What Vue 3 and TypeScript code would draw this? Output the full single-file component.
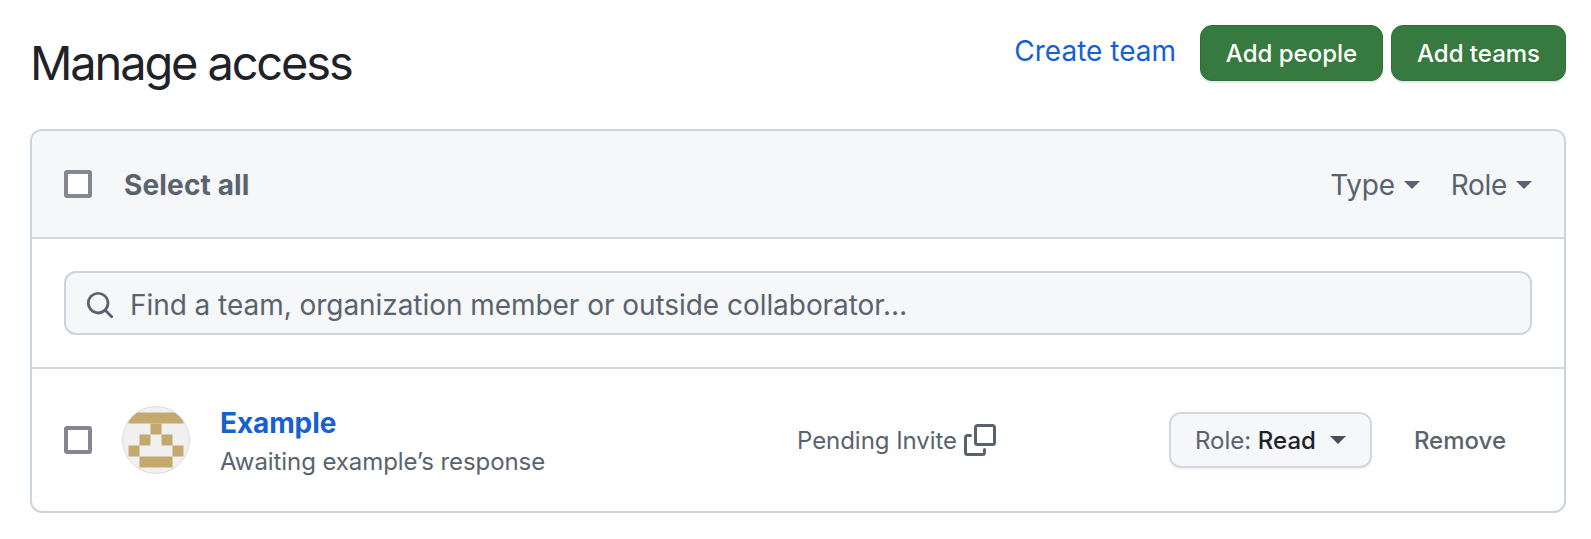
<template>
  <div class="page">
    <!-- Title row -->
    <header class="page-head">
      <h1 class="page-title">Manage access</h1>
      <div class="head-actions">
        <a class="create-link" href="#">Create team</a>
        <button class="btn-primary people">Add people</button>
        <button class="btn-primary teams">Add teams</button>
      </div>
    </header>

    <section class="access-box">
      <!-- Bulk header -->
      <div class="box-head">
        <span class="check"></span>
        <span class="select-all">Select all</span>
        <div class="filters">
          <span class="filter">Type<i class="caret"></i></span>
          <span class="filter">Role<i class="caret"></i></span>
        </div>
      </div>

      <!-- Search -->
      <div class="box-search">
        <div class="search-field">
          <svg class="search-icon" viewBox="0 0 16 16" aria-hidden="true">
            <path d="M10.68 11.74a6 6 0 0 1-7.922-8.982 6 6 0 0 1 8.982 7.922l3.04 3.04a.749.749 0 0 1-.326 1.275.749.749 0 0 1-.734-.215ZM11.5 7a4.499 4.499 0 1 0-8.997 0A4.499 4.499 0 0 0 11.5 7Z" />
          </svg>
          <span class="placeholder">Find a team, organization member or outside collaborator…</span>
        </div>
      </div>

      <!-- Member row -->
      <div class="member-row">
        <div class="member">
          <span class="check"></span>
          <svg class="avatar" viewBox="0 0 68 68" aria-hidden="true">
            <defs>
              <clipPath id="avatar-clip"><circle cx="34" cy="34" r="33.5" /></clipPath>
            </defs>
            <circle cx="34" cy="34" r="33.5" fill="#f0f0f0" />
            <g clip-path="url(#avatar-clip)">
              <rect v-for="p in pixels" :key="p.key" :x="p.x" :y="p.y" :width="p.w" height="11" fill="#c4a96f" />
            </g>
            <circle cx="34" cy="34" r="33.5" fill="none" stroke="#dcdcdc" />
          </svg>
          <div class="member-text">
            <a class="member-name" href="#">Example</a>
            <span class="member-note">Awaiting example’s response</span>
          </div>
        </div>
        <div class="pending">
          <span>Pending Invite</span>
          <svg class="copy-icon" viewBox="0 0 16 16" aria-hidden="true">
            <path d="M0 6.75C0 5.784.784 5 1.75 5h1.5a.75.75 0 0 1 0 1.5h-1.5a.25.25 0 0 0-.25.25v7.5c0 .138.112.25.25.25h7.5a.25.25 0 0 0 .25-.25v-1.5a.75.75 0 0 1 1.5 0v1.5A1.75 1.75 0 0 1 9.25 16h-7.5A1.75 1.75 0 0 1 0 14.25Z" />
            <path d="M5 1.75C5 .784 5.784 0 6.75 0h7.5C15.216 0 16 .784 16 1.75v7.5A1.75 1.75 0 0 1 14.25 11h-7.5A1.75 1.75 0 0 1 5 9.25Zm1.75-.25a.25.25 0 0 0-.25.25v7.5c0 .138.112.25.25.25h7.5a.25.25 0 0 0 .25-.25v-7.5a.25.25 0 0 0-.25-.25Z" />
          </svg>
        </div>
        <button class="role-btn">Role: <b>Read</b><i class="caret dark"></i></button>
        <span class="remove">Remove</span>
      </div>
    </section>
  </div>
</template>

<script setup lang="ts">
// identicon cells as [col, row, span]
const UNIT = 11;
const cells: [number, number, number][] = [
  [0, 0, 5],
  [2, 1, 1],
  [1, 2, 1],
  [3, 2, 1],
  [0, 3, 1],
  [4, 3, 1],
  [1, 4, 3],
];

const pixels = cells.map(([col, row, span]) => ({
  key: `${col}-${row}`,
  x: 6.5 + col * UNIT,
  y: 6.5 + row * UNIT,
  w: span * UNIT,
}));
</script>

<style>
html,
body {
  background: #ffffff;
}
</style>

<style scoped>
.page {
  box-sizing: border-box;
  width: 1591px;
  height: 539px;
  padding: 25px 25px 0 30px;
  font-family: Inter, "Liberation Sans", sans-serif;
  color: #59636e;
  overflow: hidden;
}

.page-head {
  display: flex;
  justify-content: space-between;
  align-items: flex-start;
  height: 104px;
}

.page-title {
  margin: 10px 0 0;
  font-size: 47px;
  line-height: 56px;
  font-weight: 400;
  letter-spacing: -2.15px;
  color: #1f2328;
}

.head-actions {
  display: flex;
  align-items: center;
}

.create-link {
  font-size: 28px;
  line-height: 50px;
  margin: -4px 24px 0 0;
  color: #1661d1;
  text-decoration: none;
}

.btn-primary {
  box-sizing: border-box;
  height: 56px;
  padding: 0;
  border: 1px solid #2f6f38;
  border-radius: 12px;
  background: #367a3f;
  color: #ffffff;
  font-family: inherit;
  font-size: 24px;
  font-weight: 500;
  box-shadow: 0 2px 1px rgba(31, 35, 40, 0.1);
}

.btn-primary.people {
  width: 183px;
  margin-right: 8px;
}

.btn-primary.teams {
  width: 175px;
}

.access-box {
  box-sizing: border-box;
  height: 384px;
  border: 2px solid #ccd3dc;
  border-radius: 12px;
  overflow: hidden;
}

.box-head {
  display: flex;
  align-items: center;
  height: 108px;
  padding: 0 32px;
  background: #f5f7f9;
  border-bottom: 2px solid #d3d8e0;
  box-sizing: border-box;
}

.check {
  box-sizing: border-box;
  flex: none;
  width: 28px;
  height: 28px;
  border: 4px solid #868692;
  border-radius: 3px;
  background: #ffffff;
}

.select-all {
  margin-left: 32px;
  margin-top: 2px;
  font-size: 28px;
  font-weight: 700;
  letter-spacing: 0.15px;
}

.filters {
  display: flex;
  gap: 31px;
  margin-left: auto;
  margin-top: 2px;
}

.filter {
  display: flex;
  align-items: center;
  gap: 9px;
  font-size: 28px;
  letter-spacing: -0.3px;
}

.caret {
  display: inline-block;
  width: 0;
  height: 0;
  border-style: solid;
  border-width: 8px 8px 0;
  border-color: #59636e transparent transparent;
}

.caret.dark {
  margin-left: 14px;
  border-top-color: #4a5059;
}

.box-search {
  box-sizing: border-box;
  height: 130px;
  padding: 32px 32px 0;
  border-bottom: 2px solid #d3d8e0;
}

.search-field {
  box-sizing: border-box;
  display: flex;
  align-items: center;
  gap: 15px;
  height: 64px;
  padding: 0 20px 0 19px;
  background: #f5f7f9;
  border: 2px solid #ccd3dc;
  border-radius: 12px;
}

.search-icon {
  flex: none;
  width: 30px;
  height: 30px;
  margin-top: 3px;
  fill: #59636e;
}

.placeholder {
  margin-top: 3px;
  font-size: 28px;
  letter-spacing: -0.05px;
  white-space: nowrap;
}

.member-row {
  display: flex;
  align-items: center;
  height: 142px;
  padding: 0 32px;
}

.member {
  display: flex;
  align-items: center;
  flex: 0 0 733px;
}

.avatar {
  flex: none;
  width: 68px;
  height: 68px;
  margin-left: 30px;
}

.member-text {
  display: flex;
  flex-direction: column;
  margin-top: 5px;
  margin-left: 30px;
}

.member-name {
  font-size: 28px;
  line-height: 38px;
  font-weight: 700;
  letter-spacing: -0.1px;
  color: #1661d1;
  text-decoration: none;
}

.member-note {
  font-size: 24px;
  line-height: 39px;
  letter-spacing: -0.08px;
}

.pending {
  display: flex;
  align-items: center;
  gap: 7px;
  font-size: 24px;
  letter-spacing: -0.05px;
}

.copy-icon {
  width: 32px;
  height: 32px;
  fill: #59636e;
}

.role-btn {
  box-sizing: border-box;
  display: flex;
  align-items: center;
  justify-content: center;
  height: 56px;
  width: 203px;
  margin-left: auto;
  padding: 0;
  background: #f5f7f9;
  border: 2px solid #d3d8e0;
  border-radius: 12px;
  font-family: inherit;
  font-size: 24px;
  color: #59636e;
  white-space: pre;
  box-shadow: 0 2px 1px rgba(31, 35, 40, 0.04);
}

.role-btn b {
  font-weight: 500;
  color: #1f2328;
}

.remove {
  margin-left: 42px;
  margin-right: 26px;
  font-size: 24px;
  font-weight: 500;
}
</style>
